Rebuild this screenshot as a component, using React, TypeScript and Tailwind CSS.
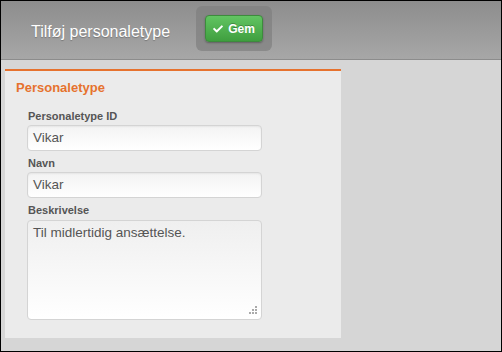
import { FaCheck } from "react-icons/fa";

const font = { fontFamily: '"Liberation Sans", Arial, sans-serif' };

const Label = ({ children }: { children: string }) => (
  <div className="pl-[23px] text-[11px] font-bold leading-[14px] text-[#555]">{children}</div>
);

const Field = ({ label, value, top }: { label: string; value: string; top: string }) => (
  <div className={top}>
    <Label>{label}</Label>
    <div className="ml-[22px] mt-[2px] flex h-[26px] w-[235px] items-center rounded-[4px] border border-[#d4d4d4] bg-gradient-to-b from-[#f3f3f3] to-white px-[5px] text-[13.5px] text-[#555] shadow-[inset_0_1px_2px_rgba(0,0,0,0.06)]">
      {value}
    </div>
  </div>
);

export default function App() {
  return (
    <div
      className="flex h-[352px] w-[502px] flex-col overflow-hidden border border-black bg-[#d6d6d6]"
      style={font}
    >
      {/* top bar */}
      <div className="flex h-[59px] shrink-0 items-start border-b border-[#8c8c8c] bg-gradient-to-b from-[#8d8d8d] to-[#a7a7a7]">
        <h1 className="ml-[30px] mt-[21px] text-[16px] leading-[20px] text-white [text-shadow:0_1px_1px_rgba(0,0,0,0.25)]">
          Tilføj personaletype
        </h1>
        <div className="ml-[26px] mt-[5px] rounded-[6px] bg-[#7f7f7f]/70 px-[9px] py-[9px]">
          <button className="flex h-[27px] w-[58px] items-center justify-center gap-[5px] rounded-[4px] border border-[#3d8b3d] bg-gradient-to-b from-[#62c462] to-[#3f9f3f] text-[12px] font-bold text-white shadow-[0_1px_2px_rgba(0,0,0,0.3)] [text-shadow:0_-1px_0_rgba(0,0,0,0.25)]">
            <FaCheck className="h-[10px] w-[10px]" />
            Gem
          </button>
        </div>
      </div>

      {/* panel */}
      <div className="ml-[4px] mt-[9px] h-[269px] w-[336px] border-t-2 border-[#e6722e] bg-[#ebebeb]">
        <h2 className="ml-[11px] mt-[8px] text-[13px] font-bold leading-[18px] text-[#e6722e]">
          Personaletype
        </h2>
        <Field label="Personaletype ID" value="Vikar" top="mt-[12px]" />
        <Field label="Navn" value="Vikar" top="mt-[5px]" />
        <div className="mt-[5px]">
          <Label>Beskrivelse</Label>
          <div className="relative ml-[22px] mt-[3px] h-[100px] w-[235px] rounded-[4px] border border-[#d4d4d4] bg-gradient-to-b from-[#efefef] to-white px-[5px] py-[4px] text-[13.5px] leading-[16px] text-[#555]">
            Til midlertidig ansættelse.
            <svg className="absolute bottom-[4px] right-[4px]" width="9" height="9" viewBox="0 0 9 9" fill="#aaa">
              <rect x="7" y="0" width="2" height="2" />
              <rect x="4" y="3" width="2" height="2" />
              <rect x="7" y="3" width="2" height="2" />
              <rect x="1" y="6" width="2" height="2" />
              <rect x="4" y="6" width="2" height="2" />
              <rect x="7" y="6" width="2" height="2" />
            </svg>
          </div>
        </div>
      </div>
    </div>
  );
}
